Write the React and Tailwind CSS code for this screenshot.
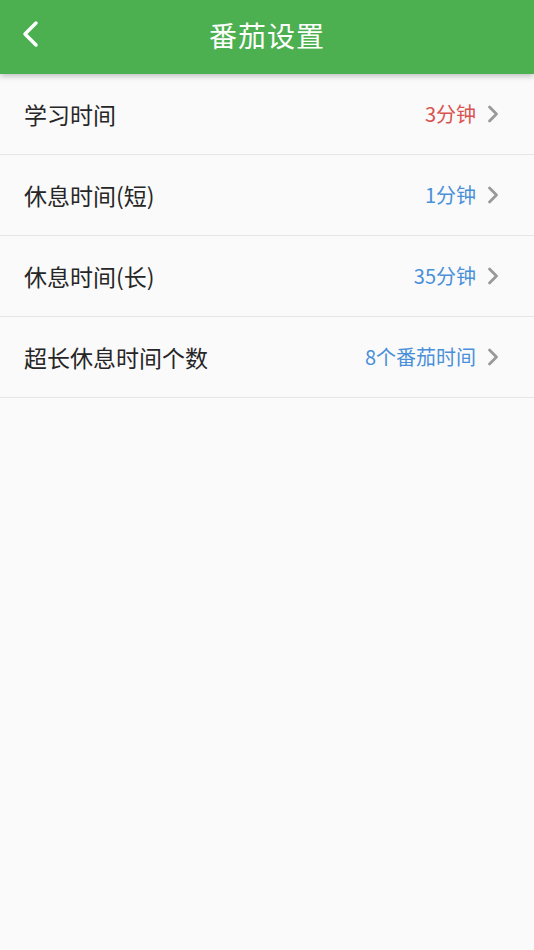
import { ChevronRight } from 'lucide-react'

const FONT = '"Noto Sans CJK SC", "Noto Sans", sans-serif'

const rows = [
  { label: '学习时间', value: '3分钟', color: 'text-[#d9534f]' },
  { label: '休息时间(短)', value: '1分钟', color: 'text-[#4a90d9]' },
  { label: '休息时间(长)', value: '35分钟', color: 'text-[#4a90d9]' },
  { label: '超长休息时间个数', value: '8个番茄时间', color: 'text-[#4a90d9]' },
]

function BackIcon() {
  return (
    <svg width="20" height="28" viewBox="0 0 20 28" fill="none">
      <path d="M16 3 L5 14 L16 25" stroke="white" strokeWidth="3.5" strokeLinecap="round" strokeLinejoin="round" />
    </svg>
  )
}

export default function App() {
  return (
    <div className="w-[534px] h-[950px] bg-[#fafafa] flex flex-col" style={{ fontFamily: FONT }}>
      <header className="relative z-10 h-[74px] bg-[#4caf50] flex items-center justify-center pb-[4px] shadow-[0_2px_6px_rgba(0,0,0,0.25)]">
        <button className="absolute left-[20px] top-[20px]">
          <BackIcon />
        </button>
        <h1 className="text-white text-[28px] leading-none tracking-[1px]">番茄设置</h1>
      </header>

      <ul className="flex flex-col">
        {rows.map((r) => (
          <li key={r.label} className="h-[81px] flex items-center pl-[24px] pr-[27px] border-b border-[#e6e6e6]">
            <span className="flex-1 text-[23px] text-[#262626]">{r.label}</span>
            <span className={`text-[20px] ${r.color}`}>{r.value}</span>
            <ChevronRight className="ml-[3px] text-[#999]" size={28} strokeWidth={2.4} />
          </li>
        ))}
      </ul>
    </div>
  )
}
